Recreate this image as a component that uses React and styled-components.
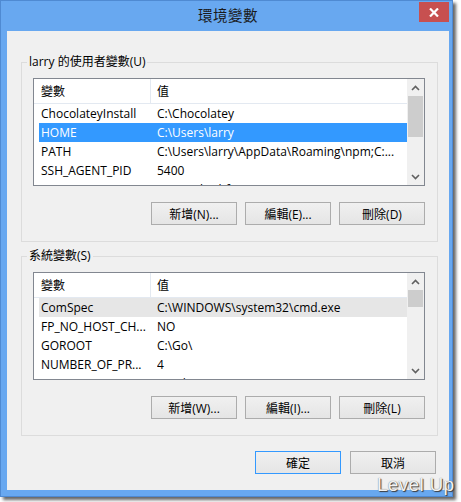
import React from "react";
import styled, { createGlobalStyle } from "styled-components";

const GlobalStyle = createGlobalStyle`
  html, body {
    margin: 0;
    background: #ffffff;
  }
  body {
    font-family: "Open Sans", "Noto Sans CJK TC", sans-serif;
    font-size: 12px;
    color: #000;
  }
`;

const Page = styled.div`
  position: relative;
  width: 461px;
  height: 502px;
  overflow: hidden;
`;

const Window = styled.div`
  box-sizing: border-box;
  width: 453px;
  height: 497px;
  display: flex;
  flex-direction: column;
  padding: 0 3px 6px 6px;
  background: #68a8f0;
  border: 1px solid #4f8ad2;
  box-shadow: 3px 3px 3px rgba(0, 0, 0, 0.6);
`;

const TitleBar = styled.div`
  height: 30px;
  flex: none;
  display: grid;
  grid-template-columns: 1fr auto 1fr;
  align-items: center;
`;

const Title = styled.div`
  grid-column: 2;
  font-size: 14.5px;
  line-height: 30px;
  color: #1a1a1a;
  letter-spacing: 0.5px;
`;

const CloseButton = styled.div`
  grid-column: 3;
  justify-self: end;
  align-self: start;
  width: 30px;
  height: 20px;
  margin-top: 1px;
  background: #c75050;
  display: flex;
  align-items: center;
  justify-content: center;
`;

const Client = styled.div`
  flex: 1;
  background: #f0f0f0;
  display: flex;
  flex-direction: column;
  padding: 23px 11px 0 14px;
`;

const Group = styled.fieldset`
  margin: ${p => (p.first ? "0" : "6px 0 0")};
  padding: 0;
  border: 1px solid #dcdcdc;
  min-width: 0;
`;

const Legend = styled.legend`
  margin-left: 5px;
  padding: 0 2px;
  line-height: 16px;
  font-size: 12px;
  color: #000;
`;

const GroupBody = styled.div`
  padding: 8px 12px 16px 11px;
`;

const ListBox = styled.div`
  box-sizing: border-box;
  height: 108px;
  border: 1px solid #828790;
  background: #ffffff;
  display: flex;
  overflow: hidden;
`;

const ListMain = styled.div`
  flex: 1;
  min-width: 0;
  display: flex;
  flex-direction: column;
  overflow: hidden;
`;

const Header = styled.div`
  box-sizing: border-box;
  flex: none;
  height: 25px;
  display: flex;
  border-bottom: 1px solid #e3e9f1;
`;

const HeaderCell = styled.div`
  box-sizing: border-box;
  display: flex;
  align-items: center;
  width: ${p => (p.first ? "117px" : "auto")};
  flex: ${p => (p.first ? "none" : "1")};
  padding-left: ${p => (p.first ? "7px" : "6px")};
  border-right: ${p => (p.first ? "1px solid #e3e9f1" : "none")};
`;

const Rows = styled.div`
  margin-left: 5px;
`;

const Row = styled.div`
  height: 19px;
  display: flex;
  align-items: center;
  padding-left: 2px;
  white-space: nowrap;
  background: ${p => (p.state === "selected" ? "#3399ff" : p.state === "hover" ? "#e6e6e6" : "transparent")};
  color: ${p => (p.state === "selected" ? "#ffffff" : "#000000")};
`;

const NameCell = styled.span`
  flex: none;
  width: 116px;
  overflow: hidden;
`;

const ValueCell = styled.span`
  flex: 1;
  overflow: hidden;
`;

const ScrollBar = styled.div`
  flex: none;
  width: 17px;
  display: flex;
  flex-direction: column;
  background: #f0f0f0;
`;

const ArrowButton = styled.div`
  flex: none;
  height: 17px;
  display: flex;
  align-items: center;
  justify-content: center;
`;

const Track = styled.div`
  flex: 1;
  display: flex;
  flex-direction: column;
`;

const Thumb = styled.div`
  height: ${p => p.size}px;
  margin: 0 1px;
  background: #cdcdcd;
`;

const ButtonRow = styled.div`
  display: flex;
  justify-content: flex-end;
  gap: ${p => p.gap || 8}px;
  margin-top: ${p => p.top || 16}px;
  padding-right: ${p => p.right || 0}px;
`;

const Button = styled.div`
  box-sizing: border-box;
  width: 86px;
  height: 23px;
  display: flex;
  align-items: center;
  justify-content: center;
  font-size: 12px;
  border: 1px solid ${p => (p.primary ? "#3399ff" : "#acacac")};
  background: linear-gradient(#f0f0f0, #e5e5e5);
  color: #000;
`;

const Watermark = styled.div`
  position: absolute;
  left: 377px;
  top: 475px;
  font-family: "Liberation Sans", Arial, sans-serif;
  font-size: 19px;
  line-height: 19px;
  letter-spacing: 0.3px;
  color: #f2f2f2;
  text-shadow: 1px 1px 1px #3a3a3a, 0 0 1px #6a6a6a;
`;

function Chevron({ up }) {
  return (
    <svg width="9" height="6" viewBox="0 0 9 6">
      <path
        d={up ? "M1 5 L4.5 1.5 L8 5" : "M1 1 L4.5 4.5 L8 1"}
        fill="none"
        stroke="#606060"
        strokeWidth="1.6"
      />
    </svg>
  );
}

function CloseIcon() {
  return (
    <svg width="10" height="9" viewBox="0 0 10 9">
      <path d="M1 0.5 L9 8.5 M9 0.5 L1 8.5" stroke="#ffffff" strokeWidth="2.2" />
    </svg>
  );
}

function VariableList({ rows, thumb }) {
  return (
    <ListBox>
      <ListMain>
        <Header>
          <HeaderCell first>變數</HeaderCell>
          <HeaderCell>值</HeaderCell>
        </Header>
        <Rows>
          {rows.map(r => (
            <Row key={r.name} state={r.state}>
              <NameCell>{r.name}</NameCell>
              <ValueCell>{r.value}</ValueCell>
            </Row>
          ))}
        </Rows>
      </ListMain>
      <ScrollBar>
        <ArrowButton>
          <Chevron up />
        </ArrowButton>
        <Track>
          <Thumb size={thumb} />
        </Track>
        <ArrowButton>
          <Chevron />
        </ArrowButton>
      </ScrollBar>
    </ListBox>
  );
}

const userVars = [
  { name: "ChocolateyInstall", value: "C:\\Chocolatey" },
  { name: "HOME", value: "C:\\Users\\larry", state: "selected" },
  { name: "PATH", value: "C:\\Users\\larry\\AppData\\Roaming\\npm;C:..." },
  { name: "SSH_AGENT_PID", value: "5400" },
  { name: "SSH_AUTH_SOCK", value: "/tmp/ssh-ohfJxZ/agent.1" },
];

const systemVars = [
  { name: "ComSpec", value: "C:\\WINDOWS\\system32\\cmd.exe", state: "hover" },
  { name: "FP_NO_HOST_CH...", value: "NO" },
  { name: "GOROOT", value: "C:\\Go\\" },
  { name: "NUMBER_OF_PR...", value: "4" },
  { name: "OS", value: "Windows_NT" },
];

export default function App() {
  return (
    <Page>
      <GlobalStyle />
      <Window>
        <TitleBar>
          <Title>環境變數</Title>
          <CloseButton>
            <CloseIcon />
          </CloseButton>
        </TitleBar>
        <Client>
          <Group first>
            <Legend>larry 的使用者變數(U)</Legend>
            <GroupBody>
              <VariableList rows={userVars} thumb={41} />
              <ButtonRow>
                <Button>新增(N)...</Button>
                <Button>編輯(E)...</Button>
                <Button>刪除(D)</Button>
              </ButtonRow>
            </GroupBody>
          </Group>
          <Group>
            <Legend>系統變數(S)</Legend>
            <GroupBody>
              <VariableList rows={systemVars} thumb={17} />
              <ButtonRow>
                <Button>新增(W)...</Button>
                <Button>編輯(I)...</Button>
                <Button>刪除(L)</Button>
              </ButtonRow>
            </GroupBody>
          </Group>
          <ButtonRow top={15} gap={9} right={2}>
            <Button primary>確定</Button>
            <Button>取消</Button>
          </ButtonRow>
        </Client>
      </Window>
      <Watermark>Level Up</Watermark>
    </Page>
  );
}
